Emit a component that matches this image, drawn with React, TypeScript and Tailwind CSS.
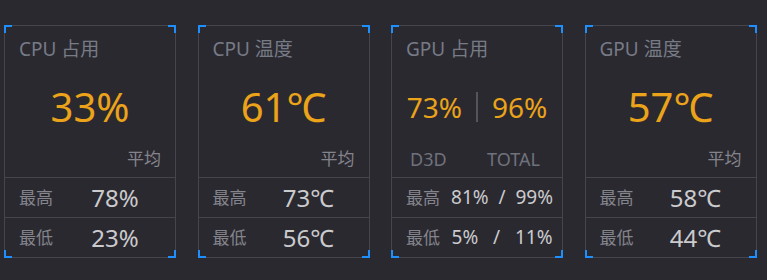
import React from "react";

const FONT = { fontFamily: '"Noto Sans", "Noto Sans CJK SC", sans-serif' };

function Corners() {
  const c = "absolute w-[8px] h-[8px] border-[#1e8fff]";
  return (
    <>
      <div className={`${c} -top-px -left-px border-t-2 border-l-2`} />
      <div className={`${c} -top-px -right-px border-t-2 border-r-2`} />
      <div className={`${c} -bottom-px -left-px border-b-2 border-l-2`} />
      <div className={`${c} -bottom-px -right-px border-b-2 border-r-2`} />
    </>
  );
}

function Row({ label, children }: { label: string; children: React.ReactNode }) {
  return (
    <div className="flex h-[40px] items-center border-t border-[#46454e] pl-[14px]">
      <span className="w-[36px] text-[17px] text-[#84848c]">{label}</span>
      <div className="flex flex-1 justify-center text-[24px] text-[#cbcbce]">{children}</div>
    </div>
  );
}

function Card({
  title,
  big,
  sub,
  rows,
}: {
  title: string;
  big: React.ReactNode;
  sub: React.ReactNode;
  rows: [string, React.ReactNode][];
}) {
  return (
    <div className="relative flex w-[172px] flex-col border border-[#46454e] bg-[#2a2930]">
      <Corners />
      <div className="flex h-[151px] flex-col">
        <div className="flex h-[47px] items-center px-[14px] text-[19px] text-[#777b86]">{title}</div>
        <div className="flex h-[68px] items-center justify-center">{big}</div>
        <div className="flex h-[36px] items-center">{sub}</div>
      </div>
      {rows.map(([l, v], i) => (
        <Row key={i} label={l}>
          {v}
        </Row>
      ))}
    </div>
  );
}

const Avg = () => (
  <div className="w-full pr-[14px] text-right text-[17px] text-[#84848c]">平均</div>
);

export default function App() {
  return (
    <div className="h-[280px] w-[767px] bg-[#2a2930] pl-[4px] pt-[25px]" style={FONT}>
      <div className="flex gap-[21.5px]">
        <Card
          title="CPU 占用"
          big={<span className="text-[40px] text-[#eba31a]">33%</span>}
          sub={<Avg />}
          rows={[
            ["最高", "78%"],
            ["最低", "23%"],
          ]}
        />
        <Card
          title="CPU 温度"
          big={<span className="text-[40px] text-[#eba31a]">61℃</span>}
          sub={<Avg />}
          rows={[
            ["最高", "73℃"],
            ["最低", "56℃"],
          ]}
        />
        <Card
          title="GPU 占用"
          big={
            <div className="flex items-center text-[28px] text-[#eba31a]">
              <span>73%</span>
              <span className="mx-[14px] h-[30px] w-[2px] bg-[#55545c]" />
              <span>96%</span>
            </div>
          }
          sub={
            <div className="flex w-full text-[18px] text-[#6f727c]">
              <span className="w-[70px] pl-[18px]">D3D</span>
              <span className="pl-[25px]">TOTAL</span>
            </div>
          }
          rows={[
            [
              "最高",
              <span className="text-[19px]">81%&nbsp;&nbsp;/&nbsp;&nbsp;99%</span>,
            ],
            [
              "最低",
              <span className="text-[19px]">5%&nbsp;&nbsp;&nbsp;/&nbsp;&nbsp;&nbsp;11%</span>,
            ],
          ]}
        />
        <Card
          title="GPU 温度"
          big={<span className="text-[40px] text-[#eba31a]">57℃</span>}
          sub={<Avg />}
          rows={[
            ["最高", "58℃"],
            ["最低", "44℃"],
          ]}
        />
      </div>
    </div>
  );
}
